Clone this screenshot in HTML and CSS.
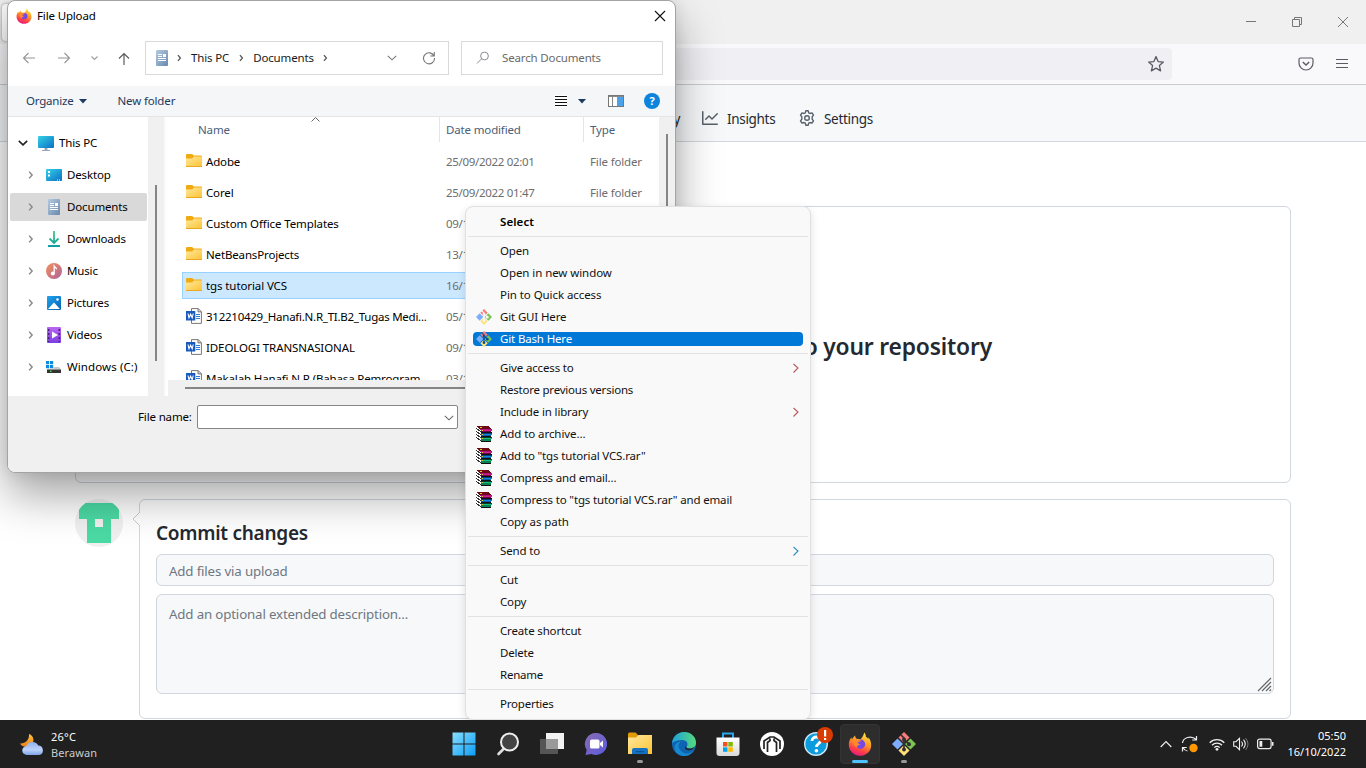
FILE: index.html
```html
<!DOCTYPE html>
<html lang="en">
<head>
<meta charset="utf-8">
<title>File Upload</title>
<link rel="stylesheet" href="styles.css">
</head>
<body>
<svg class="sprite" width="0" height="0" aria-hidden="true">
  <defs>
    <linearGradient id="gFolder" x1="0" y1="0" x2="1" y2="1"><stop offset="0" stop-color="#ffe8a0"/><stop offset="1" stop-color="#fcc433"/></linearGradient>
    <linearGradient id="gScreen" x1="0" y1="0" x2="1" y2="1"><stop offset="0" stop-color="#35d1e6"/><stop offset="1" stop-color="#0b6fc4"/></linearGradient>
    <linearGradient id="gDoc" x1="0" y1="0" x2="1" y2="1"><stop offset="0" stop-color="#b4cbe0"/><stop offset="1" stop-color="#6889ae"/></linearGradient>
    <linearGradient id="gMusic" x1="0" y1="0" x2="1" y2="1"><stop offset="0" stop-color="#f2935a"/><stop offset="1" stop-color="#b0609e"/></linearGradient>
    <linearGradient id="gVideo" x1="0" y1="0" x2="0" y2="1"><stop offset="0" stop-color="#b866f0"/><stop offset="1" stop-color="#7d3fe0"/></linearGradient>
    <linearGradient id="gPic" x1="0" y1="0" x2="1" y2="1"><stop offset="0" stop-color="#20a4ee"/><stop offset="1" stop-color="#0563b5"/></linearGradient>
    <linearGradient id="gDown" gradientUnits="userSpaceOnUse" x1="0" y1="0" x2="0" y2="16"><stop offset="0" stop-color="#3ccb7c"/><stop offset="1" stop-color="#0e9da3"/></linearGradient>
    <linearGradient id="gWin" gradientUnits="userSpaceOnUse" x1="0" y1="0" x2="24" y2="24"><stop offset="0" stop-color="#8be0ff"/><stop offset="1" stop-color="#0a9bf5"/></linearGradient>
    <linearGradient id="gFox" x1=".7" y1="0" x2=".3" y2="1"><stop offset="0" stop-color="#ffe43d"/><stop offset=".45" stop-color="#ff9326"/><stop offset=".75" stop-color="#ff3d47"/><stop offset="1" stop-color="#e2158a"/></linearGradient>
    <linearGradient id="gChat" x1="0" y1="0" x2="1" y2="1"><stop offset="0" stop-color="#8a6bb0"/><stop offset="1" stop-color="#5b5be0"/></linearGradient>
    <linearGradient id="gEdge" x1="0" y1="0" x2="1" y2="0"><stop offset="0" stop-color="#1ea0dc"/><stop offset="1" stop-color="#55da7c"/></linearGradient>
    <linearGradient id="gBag" x1="0" y1="0" x2="0" y2="1"><stop offset="0" stop-color="#fff"/><stop offset="1" stop-color="#d9d9d9"/></linearGradient>
    <linearGradient id="gCloud" x1="0" y1="0" x2="0" y2="1"><stop offset="0" stop-color="#8fb2ea"/><stop offset=".6" stop-color="#bcd2fa"/><stop offset="1" stop-color="#7da4e6"/></linearGradient>
    <linearGradient id="gMoon" x1="0" y1="0" x2="0" y2="1"><stop offset="0" stop-color="#fbc43c"/><stop offset="1" stop-color="#f0801c"/></linearGradient>
  </defs>
  <symbol id="firefox" viewBox="0 0 24 24">
    <path fill="url(#gFox)" d="M16.200.5c1.300 1.300 1.700 3 1.800 4.500.8.4 1.900 1.200 2.500 2.200 0-.7-.1-1.500-.4-2.200 2 2.100 3.100 5 3.100 8.200C23.200 19.300 18.200 23.800 12 23.800S.8 18.800.8 12.800c0-3.200 1.100-5.600 2.700-7.500 0 1 .2 1.600.5 2.200.9-1.600 1.900-3 3.200-3.900-.1 1.300.4 2.400 1.300 3.100 1.400.3 2.800-.1 4 .5C14 5.800 15.500 3.700 16.200.5z"/>
    <circle cx="12.500" cy="12.200" r="4.700" fill="#7848e0"/>
    <path fill="#ff8a2a" d="M5 8.500c2.500-1.600 5-1.400 8.200.2-1 1.200-3.300 1-4 2.300 1.200.2 2.600.8 3 2-1.600-.4-2.700.3-3 1.700C8.900 16.400 5 13.500 5 8.500z"/>
  </symbol>
  <symbol id="folder" viewBox="0 0 16 13"><path fill="#f1ab12" d="M0 1.200Q0 0 1 0h5.200l1.600 1.600H15Q16 1.600 16 2.600V13H0z"/><path fill="url(#gFolder)" d="M0 4.500h6.200L8 2.500h8v9.800H0z"/><path fill="#e9a822" d="M0 12h16v1H0z"/></symbol>
  <symbol id="word" viewBox="0 0 16 16"><path d="M5.500.6h6.800l3.100 3.100v11.700H5.500z" fill="#fff" stroke="#777"/><path d="M12 .6v3.300h3.400" fill="#ccc" stroke="#777"/><path d="M10 6.500h4M10 8.500h4M10 10.500h4" stroke="#2b7cd3"/><path fill="#185abd" d="M0 3h9.300v9.500H0z"/><path d="m2 5.500 1 4.300L4.600 6.200l1.600 3.600 1-4.300" fill="none" stroke="#fff" stroke-width="1.100"/></symbol>
  <symbol id="doc" viewBox="0 0 12 16"><rect width="12" height="16" rx="1" fill="url(#gDoc)"/><path d="M2 4.500h4M2 6.500h4M2 8.500h8M2 10.500h8" stroke="#fff"/><path fill="#fff" d="M7 4h3v3H7z"/></symbol>
  <symbol id="pc" viewBox="0 0 16 16"><rect y="1" width="16" height="12" rx="1" fill="url(#gScreen)"/><path d="M6.500 13h3v2H12v1H4v-1h2.500z" fill="#9aa7b3"/></symbol>
  <symbol id="desktop" viewBox="0 0 16 12"><rect width="16" height="12" rx="1" fill="url(#gScreen)"/><path fill="#fff" d="M2 2h2v2H2zM2 5.500h2v2H2zM11 10.500h1v1h-1zM13 10.500h1v1h-1z"/></symbol>
  <symbol id="download" viewBox="0 0 14 16"><path d="M7 0v11.500M2.500 7.500 7 12l4.500-4.500M1 15h12" fill="none" stroke="url(#gDown)" stroke-width="1.800"/></symbol>
  <symbol id="music" viewBox="0 0 16 16"><circle cx="8" cy="8" r="8" fill="url(#gMusic)"/><circle cx="6.800" cy="10.600" r="2" fill="#fff"/><path d="M8.200 10.500V3.200c.8 1.200 2.300 1.300 2.300 3" fill="none" stroke="#fff" stroke-width="1.300"/></symbol>
  <symbol id="picture" viewBox="0 0 14 14"><rect width="14" height="14" rx="1" fill="url(#gPic)"/><path fill="#fff" d="m1 13 6-6.500 6 6.500z"/><circle cx="10.500" cy="3.500" r="1.200" fill="#fff"/></symbol>
  <symbol id="video" viewBox="0 0 14 16"><rect width="14" height="16" rx="1" fill="url(#gVideo)"/><path fill="#fff" d="m5 4.500 6 3.500-6 3.500z"/><path stroke="#43207c" stroke-width="1.500" stroke-dasharray="2 2" d="M1.700 2v13M12.300 2v13"/></symbol>
  <symbol id="drive" viewBox="0 0 16 13"><path fill="#c9c9c9" d="M3 6h10l2 2.500H1z"/><path fill="#fff" d="M0 0h7.700v7.700H0z"/><path fill="#0a8be0" d="M0 0h3.200v3.200H0zM4 0h3.200v3.200H4zM0 4h3.200v3.200H0zM4 4h3.200v3.200H4z"/><path fill="#333" d="M1 8.500h14V12H1z"/><path fill="#4be04b" d="M4 9.500h1.500V11H4z"/></symbol>
  <symbol id="gitmark" viewBox="0 0 24 24">
    <path fill="#f87c7c" d="m12 0 5.500 5.500L12 11 6.500 5.500z"/><path fill="#7caefc" d="m5.500 6.500 5.500 5.500-5.500 5.500L0 12z"/><path fill="#7cc452" d="m18.500 6.500L24 12l-5.500 5.500L13 12z"/><path fill="#ffe07c" d="m12 13 5.500 5.500L12 24l-5.500-5.500z"/>
    <path d="M8.500 2.500 12 6v12M12 7.500l5 4.500" fill="none" stroke="currentColor" stroke-width="1.700"/><g fill="currentColor"><circle cx="12" cy="7.500" r="2"/><circle cx="17" cy="12.200" r="2"/><circle cx="12" cy="17.500" r="2"/></g>
  </symbol>
  <symbol id="rar" viewBox="0 0 16 16" shape-rendering="crispEdges">
    <path fill="#fff" d="M0 1h4l2 4v11H4l-4-4z"/>
    <path d="M0 2l5 4M0 5l5 4M0 8l5 4M0 11l5 4" stroke="#333" fill="none"/>
    <path fill="#6d0a16" d="M1 0h11l4 3v1H4L1 1z"/>
    <path fill="#111" d="M5 6h11v1H5zM5 10h10v1H5zM5 15h10v1H5z"/>
    <path fill="#b0107c" d="M4 3h12v1H4z"/><path fill="#d0208c" d="M5 4h11v1H5z"/><path fill="#6e0446" d="M5 5h10v1H5z"/>
    <path fill="#083c78" d="M5 7h11v1H5z"/><path fill="#1488e0" d="M5 8h11v1H5z"/><path fill="#0d5ca8" d="M5 9h10v1H5z"/>
    <path fill="#063c2c" d="M5 11h11v1H5z"/><path fill="#14c084" d="M5 12h11v1H5z"/><path fill="#088050" d="M5 13h10v2H5z"/>
    <path fill="#e0d020" d="M4 1h2v1H4zM6 4h1v1H6zM6 8h1v1H6zM6 12h1v1H6z"/>
  </symbol>
  <symbol id="cr" viewBox="0 0 8 12"><path d="m1.500 1.500 4 4.500-4 4.500" fill="none" stroke="currentColor" stroke-width="2"/></symbol>
  <symbol id="crThin" viewBox="0 0 8 12"><path d="M1.500 2 6 6l-4.500 4.500" fill="none" stroke="currentColor" stroke-width="1.100"/></symbol>
  <symbol id="cd" viewBox="0 0 10 6"><path d="m.8.8 4.200 4 4.200-4" fill="none" stroke="currentColor" stroke-width="1.100"/></symbol>
</svg>

<div class="screen">
  <main class="browser">
    <div class="tabstrip">
      <div class="tab"></div>
      <div class="caption">
        <svg width="12" height="12"><path d="M1 5.500h10" stroke="#777"/></svg>
        <svg width="12" height="12"><path d="M1.500 3.500h7v7h-7zM3.500 3V1.500h7v7H9" fill="none" stroke="#777"/></svg>
        <svg width="12" height="12"><path d="m1 1 10 10M11 1 1 11" stroke="#777"/></svg>
      </div>
    </div>
    <div class="toolbar">
      <div class="urlbar"><svg width="18" height="18" viewBox="0 0 18 18"><path d="m9 1.600 2.100 5 5.300.5-4 3.500 1.200 5.300L9 13.100l-4.600 2.800 1.200-5.300-4-3.500 5.300-.5z" fill="none" stroke="#5b5b66" stroke-width="1.300" stroke-linejoin="round"/></svg></div>
      <svg class="pocket" width="16" height="16" viewBox="0 0 16 16"><path d="M2.500 2h11Q15 2 15 3.500V7a7 7 0 0 1-14 0V3.500Q1 2 2.500 2z" fill="none" stroke="#5b5b66" stroke-width="1.200"/><path d="m4.800 6 3.200 3 3.200-3" fill="none" stroke="#5b5b66" stroke-width="1.400"/></svg>
      <svg width="14" height="12"><path d="M1 1.500h12M1 5.500h12M1 9.500h12" stroke="#5b5b66" stroke-width="1.200"/></svg>
    </div>
    <nav class="reponav">
      <span class="nav-sec">Security</span>
      <svg width="16" height="16" viewBox="0 0 16 16" fill="#57606a"><path d="M1.500 1.750V13.500h13.750a.75.75 0 0 1 0 1.500H.75a.75.75 0 0 1-.75-.75V1.750a.75.75 0 0 1 1.500 0Zm14.280 2.530-5.250 5.250a.75.75 0 0 1-1.060 0L7 7.060 4.280 9.780a.75.75 0 0 1-1.060-1.060l3.250-3.250a.75.75 0 0 1 1.060 0L10 7.940l4.720-4.720a.75.75 0 0 1 1.060 1.060Z"/></svg>
      <span class="nav-ins">Insights</span>
      <svg width="16" height="16" viewBox="0 0 16 16" fill="none" stroke="#57606a" stroke-width="1.400" stroke-linejoin="round"><circle cx="8" cy="8" r="2.300"/><path d="m6.800.8h2.400l.5 2 1.300.7 2-.6 1.500 2.200-1.300 1.600v2.600l1.300 1.600-1.500 2.200-2-.6-1.300.7-.5 2H6.800l-.5-2-1.300-.7-2 .6-1.500-2.200 1.300-1.600V6.700L1.500 5.100 3 2.900l2 .6 1.300-.7z"/></svg>
      <span class="nav-set">Settings</span>
    </nav>
    <section class="dropbox"><h1>Drag additional files here to add them to your repository</h1></section>
    <section class="commit">
      <svg class="avatar" width="48" height="48" viewBox="0 0 48 48"><defs><clipPath id="round"><circle cx="24" cy="24" r="24"/></clipPath></defs><g clip-path="url(#round)"><path fill="#f0f0f0" d="M0 0h48v48H0z"/><path fill="#4bdaa4" fill-rule="evenodd" d="M4 4h40v16h-8v24H12V20H4zM20 20v8h8v-8z"/></g></svg>
      <div class="commit-card">
        <svg class="notch" width="9" height="16" viewBox="0 0 9 16"><path fill="#fff" d="M9 0 1 8l8 8z"/><path d="M8 1 1 8l7 7" fill="none" stroke="#c4ccd4"/></svg>
        <h2>Commit changes</h2>
        <div class="field one">Add files via upload</div>
        <div class="field area">Add an optional extended description…<svg class="grip" width="15" height="15"><path d="M1 14 14 1M5 14l9-9M9 14l5-5M12.500 14l1.500-1.500" stroke="#666" stroke-width="1.200"/></svg></div>
      </div>
    </section>
  </main>

  <div class="dialog">
    <header class="d-title"><svg width="16" height="16"><use href="#firefox"/></svg><span>File Upload</span>
      <svg class="close" width="12" height="12"><path d="m1 1 10 10M11 1 1 11" stroke="#111" stroke-width="1.100"/></svg></header>
    <div class="d-nav">
      <svg width="14" height="12" class="back"><path d="M13 6H1.500M6.500 1l-5 5 5 5" fill="none" stroke="#969696" stroke-width="1.100"/></svg>
      <svg width="14" height="12" class="fwd"><path d="M1 6h11.500M7.500 1l5 5-5 5" fill="none" stroke="#969696" stroke-width="1.100"/></svg>
      <svg width="7" height="5" class="rec"><path d="m.5.5 3 3 3-3" fill="none" stroke="#a0a0a0" stroke-width="1.200"/></svg>
      <svg width="12" height="13" class="up"><path d="M6 13V1.500M1 6.500l5-5 5 5" fill="none" stroke="#5c5c5c" stroke-width="1.200"/></svg>
      <div class="crumbs"><svg width="12" height="16"><use href="#doc"/></svg>
        <svg class="c1" width="5" height="8"><use href="#cr"/></svg><span>This PC</span>
        <svg class="c2" width="5" height="8"><use href="#cr"/></svg><span>Documents</span>
        <svg class="c3" width="5" height="8"><use href="#cr"/></svg>
        <svg class="cdown" width="10" height="6"><use href="#cd"/></svg>
        <svg class="reload" width="14" height="14" viewBox="0 0 14 14"><path d="M12 5a5.500 5.500 0 1 0 .5 2M12.300 1v4h-4" fill="none" stroke="#777" stroke-width="1.100"/></svg>
      </div>
      <div class="search"><svg width="14" height="14"><circle cx="8.500" cy="5" r="3.900" fill="none" stroke="#8a8a94"/><path d="M5.700 7.700 1 12.500" stroke="#8a8a94"/></svg><span>Search Documents</span></div>
    </div>
    <div class="d-tools">
      <span class="org">Organize</span><svg class="tri" width="8" height="5"><path fill="#1d3b62" d="M0 0h8L4 4.500z"/></svg>
      <span class="newf">New folder</span>
      <svg class="view" width="12" height="12" shape-rendering="crispEdges"><path d="M0 1.500h12M0 4.500h12M0 7.500h12M0 10.500h12" stroke="#111"/></svg>
      <svg class="tri2" width="8" height="5"><path fill="#1d3b62" d="M0 0h8L4 4.500z"/></svg>
      <svg class="pane" width="16" height="12" shape-rendering="crispEdges"><path d="M.5.500h15v11H.5z" fill="#fff" stroke="#777"/><path d="M1 1.500h14M4.500 1v10" stroke="#888"/><path fill="#4aa3ea" d="M9 2h6v9H9z"/></svg>
      <span class="help">?</span>
    </div>
    <div class="d-body">
      <aside class="tree">
        <div class="node root"><svg width="10" height="6" viewBox="0 0 10 6"><path d="m.8.8 4.200 4 4.200-4" fill="none" stroke="#222" stroke-width="1.600"/></svg><svg class="ic" width="16" height="16"><use href="#pc"/></svg>This PC</div>
        <div class="node"><svg width="6" height="10"><use href="#cr"/></svg><svg class="ic" width="16" height="12"><use href="#desktop"/></svg>Desktop</div>
        <div class="node sel"><svg width="6" height="10"><use href="#cr"/></svg><svg class="ic" width="16" height="16"><use href="#doc"/></svg>Documents</div>
        <div class="node"><svg width="6" height="10"><use href="#cr"/></svg><svg class="ic" width="16" height="16"><use href="#download"/></svg>Downloads</div>
        <div class="node"><svg width="6" height="10"><use href="#cr"/></svg><svg class="ic" width="16" height="16"><use href="#music"/></svg>Music</div>
        <div class="node"><svg width="6" height="10"><use href="#cr"/></svg><svg class="ic" width="16" height="14"><use href="#picture"/></svg>Pictures</div>
        <div class="node"><svg width="6" height="10"><use href="#cr"/></svg><svg class="ic" width="16" height="16"><use href="#video"/></svg>Videos</div>
        <div class="node drive"><svg width="6" height="10"><use href="#cr"/></svg><svg class="ic" width="16" height="13"><use href="#drive"/></svg>Windows (C:)</div>
      </aside>
      <div class="gutter"><i></i></div>
      <div class="files">
        <div class="cols"><span class="cn">Name<svg class="sort" width="9" height="5"><path d="m.5 4.500 4-4 4 4" fill="none" stroke="#666"/></svg></span><span class="cdt">Date modified</span><span class="ct">Type</span></div>
        <div class="rows">
          <div class="row"><svg width="16" height="13"><use href="#folder"/></svg><b>Adobe</b><span>25/09/2022 02:01</span><em>File folder</em></div>
          <div class="row"><svg width="16" height="13"><use href="#folder"/></svg><b>Corel</b><span>25/09/2022 01:47</span><em>File folder</em></div>
          <div class="row"><svg width="16" height="13"><use href="#folder"/></svg><b class="wide">Custom Office Templates</b><span>09/10/2022</span></div>
          <div class="row"><svg width="16" height="13"><use href="#folder"/></svg><b>NetBeansProjects</b><span>13/10/2022</span></div>
          <div class="row picked"><svg width="16" height="13"><use href="#folder"/></svg><b class="wide">tgs tutorial VCS</b><span>16/10/2022</span></div>
          <div class="row w"><svg width="16" height="16"><use href="#word"/></svg><b class="long">312210429_Hanafi.N.R_TI.B2_Tugas Medi...</b><span>05/10/2022</span></div>
          <div class="row w"><svg width="16" height="16"><use href="#word"/></svg><b class="wide">IDEOLOGI TRANSNASIONAL</b><span>09/10/2022</span></div>
          <div class="row w"><svg width="16" height="16"><use href="#word"/></svg><b>Makalah Hanafi.N.R (Bahasa Pemrogram...</b><span>03/10/2022</span></div>
        </div>
        <div class="hscroll"><i></i></div>
      </div>
      <div class="vscroll"><i></i></div>
    </div>
    <div class="d-foot"><label>File name:</label><div class="combo"><svg width="10" height="6"><use href="#cd"/></svg></div></div>
  </div>

  <ul class="menu">
    <li class="strong">Select</li>
    <li class="sep"></li>
    <li>Open</li><li class="wide">Open in new window</li><li class="wide">Pin to Quick access</li>
    <li><svg class="mi gui" width="16" height="16"><use href="#gitmark"/></svg>Git GUI Here</li>
    <li class="hot"><svg class="mi bash" width="16" height="16"><use href="#gitmark"/></svg>Git Bash Here</li>
    <li class="sep"></li>
    <li>Give access to<svg class="sub red" width="8" height="12"><use href="#crThin"/></svg></li>
    <li class="tight">Restore previous versions</li>
    <li>Include in library<svg class="sub red" width="8" height="12"><use href="#crThin"/></svg></li>
    <li class="wide"><svg class="mi" width="16" height="16"><use href="#rar"/></svg>Add to archive...</li>
    <li><svg class="mi" width="16" height="16"><use href="#rar"/></svg>Add to "tgs tutorial VCS.rar"</li>
    <li><svg class="mi" width="16" height="16"><use href="#rar"/></svg>Compress and email...</li>
    <li><svg class="mi" width="16" height="16"><use href="#rar"/></svg>Compress to "tgs tutorial VCS.rar" and email</li>
    <li class="wide">Copy as path</li>
    <li class="sep"></li>
    <li>Send to<svg class="sub blue" width="8" height="12"><use href="#crThin"/></svg></li>
    <li class="sep"></li>
    <li>Cut</li><li>Copy</li>
    <li class="sep"></li>
    <li>Create shortcut</li><li class="tight">Delete</li><li class="tight">Rename</li>
    <li class="sep"></li>
    <li class="tight">Properties</li>
  </ul>

  <footer class="taskbar">
    <div class="weather">
      <svg width="24" height="22" viewBox="0 0 24 22"><path fill="url(#gMoon)" d="M9 0c5 1.500 6 8 2 11S2 13 0 9.500C5 10 9.500 6 9 0z"/><path fill="url(#gCloud)" d="M7 21a4.500 4.500 0 0 1-.5-9 6.500 6.500 0 0 1 11.800-.5A4.800 4.800 0 0 1 19 21z"/></svg>
      <div><p class="temp">26°C</p><p class="dim">Berawan</p></div>
    </div>
    <div class="apps">
      <div><svg width="24" height="24" viewBox="0 0 24 24" fill="url(#gWin)"><path d="M.5.500h11v11H.5zM12.500.5h11v11h-11zM.5 12.500h11v11H.5zM12.500 12.500h11v11h-11z"/></svg></div>
      <div><svg width="24" height="24" viewBox="0 0 24 24"><path d="M7.500 17 2.500 22" stroke="#ddd" stroke-width="2.600" stroke-linecap="round"/><circle cx="13.500" cy="10" r="8.500" fill="#444" stroke="#eee" stroke-width="2"/></svg></div>
      <div><svg width="24" height="24" viewBox="0 0 24 24"><path fill="#f2f2f2" d="M6 1h18v16H6z"/><path fill="#555" d="M0 7h18v15H0z"/><path fill="#9a9a9a" d="M6 7h12v10H6z"/></svg></div>
      <div><svg width="24" height="24" viewBox="0 0 24 24"><path fill="url(#gChat)" d="M12.500 1a11 11 0 1 1-5 21L1.500 23l1.200-5A11 11 0 0 1 12.500 1z"/><rect x="6" y="7.500" width="9.500" height="9" rx="1.500" fill="#fff"/><path fill="#fff" d="m16 11 3-2.500v7L16 13z"/></svg></div>
      <div class="run"><svg width="24" height="24" viewBox="0 0 24 24"><path fill="#e19b07" d="M0 2q0-1.500 1.500-1.500h6L10 3v5H0z"/><path fill="url(#gFolder)" d="M0 5.500h8L10.500 3H24v19H0z"/><path fill="#1473c4" d="M4 22v-4q0-2 2-2h12q2 0 2 2v4z"/><path fill="#0b5394" d="M8 19h8v1.300H8z"/></svg></div>
      <div><svg width="24" height="24" viewBox="0 0 24 24"><circle cx="12" cy="12" r="12" fill="#0f63b0"/><path fill="url(#gEdge)" d="M0 11.500C.4 5 5.500 0 12 0c7 0 12 5 12 10.500 0 4-3 6-6 6-3.500 0-4-1.300-3-2.500 1.500-2 .2-6-5-6C5 8 1.500 9.500 0 11.500z"/><path fill="#1688d0" d="M9 9.500c-4 3-3 9 3 11.500 4 1.500 8-.3 10-3-2 5-10 8-15.500 4.500C0 18.300 2 10 9 9.500z"/><path fill="#222" d="M14.500 14c-1 1.300-.4 2.500 3 2.500 2 0 3.500-.7 4.700-1.800-1 3-4 4-6.700 3.300-3-.7-3.300-3.500-1-4z"/></svg></div>
      <div><svg width="24" height="24" viewBox="0 0 24 24"><path d="M7 6V1.500h10V6" fill="none" stroke="#2aa8ee" stroke-width="2"/><path fill="url(#gBag)" d="M.5 5.500h23V21q0 3-3 3h-17q-3 0-3-3z"/><path fill="#f25022" d="M7 10h4.500v4.500H7z"/><path fill="#7fba00" d="M12.300 10h4.500v4.500h-4.500z"/><path fill="#00a4ef" d="M7 15.300h4.500v4.500H7z"/><path fill="#ffb900" d="M12.300 15.300h4.500v4.500h-4.500z"/></svg></div>
      <div><svg width="24" height="24" viewBox="0 0 24 24"><circle cx="12" cy="12" r="12" fill="#fff"/><path d="M4 17V9l6-4h4l6 4v8M7.500 20v-9.500L10 8.500v-2M16.500 20v-9.500L14 8.500v-2" fill="none" stroke="#222" stroke-width="1.700"/></svg></div>
      <div class="helpapp"><svg width="24" height="24" viewBox="0 0 24 24"><circle cx="12" cy="12" r="11.300" fill="#0c9bdc" stroke="#c9e7f6" stroke-width="1.400"/><path d="M8 9c0-5.500 8.500-5 8.500-.5 0 3.200-4 3.200-4 6.500" fill="none" stroke="#fff" stroke-width="2.800"/><circle cx="12.400" cy="18.700" r="1.800" fill="#fff"/></svg><svg class="alert" width="16" height="16"><circle cx="8" cy="8" r="8" fill="#da3b01"/><path fill="#fff" d="M7 3h2.200v6.500H7zM7 11h2.200v2H7z"/></svg></div>
      <div class="active"><svg width="24" height="24"><use href="#firefox"/></svg></div>
      <div class="run"><svg class="bash" width="24" height="24"><use href="#gitmark"/></svg></div>
    </div>
    <div class="tray">
      <svg width="12" height="8"><path d="m.7 7 5.300-5.500L11.300 7" fill="none" stroke="#eee" stroke-width="1.200"/></svg>
      <svg class="sync" width="18" height="18" viewBox="0 0 18 18"><path d="M1.500 8C2 2.500 10 0 15.300 4.500M15.500 1v4h-4.300M1.500 16.500v-4h4.300M2 12.800C3 14.500 4.500 15.800 6.500 16" fill="none" stroke="#eee" stroke-width="1.200"/><circle cx="12.500" cy="13" r="4.200" fill="#ff9800"/></svg>
      <svg class="wifi" width="16" height="13" viewBox="0 0 16 13"><path d="M.7 4.700a10.300 10.300 0 0 1 14.600 0M3 7.200a7 7 0 0 1 10 0M5.300 9.600a3.800 3.800 0 0 1 5.400 0" fill="none" stroke="#eee" stroke-width="1.300"/><circle cx="8" cy="11.300" r="1.400" fill="#eee"/></svg>
      <svg class="vol" width="16" height="14" viewBox="0 0 16 14"><path d="M.7 4.700H3L6.500 1.300v11.400L3 9.300H.7zM8.500 4.500q2 2.500 0 5M10.500 2.700q3.500 4.300 0 8.600" fill="none" stroke="#eee" stroke-width="1.100"/><path d="M12.500 1q5 6 0 12" fill="none" stroke="#777"/></svg>
      <svg class="bat" width="17" height="12" viewBox="0 0 17 12"><rect x=".6" y="1.100" width="13.500" height="9.500" rx="2" fill="none" stroke="#eee" stroke-width="1.200"/><path fill="#eee" d="M2.500 3h2.800v5.800H2.500zM15 4h1.500v3.800H15z"/></svg>
      <div class="clock"><p>05:50</p><p>16/10/2022</p></div>
    </div>
  </footer>
</div>
</body>
</html>
```

FILE: styles.css
```css
* { box-sizing: border-box; margin: 0; padding: 0; }
body { font-family: "Noto Sans", "Open Sans", sans-serif; overflow: hidden; }
svg { display: block; flex: none; }
.sprite { position: absolute; }
.screen { position: relative; width: 1366px; height: 768px; background: #fff; overflow: hidden; display: flex; flex-direction: column; }

/* browser page */
.browser { flex: 1; min-height: 0; overflow: hidden; }
.tabstrip { height: 44px; background: #f0f0f0; display: flex; justify-content: space-between; align-items: center; }
.tab { width: 200px; height: 37px; margin-left: 2px; background: #fff; border-radius: 4px; box-shadow: 0 0 3px rgba(0,0,0,.4); }
.caption { display: flex; gap: 34px; padding-right: 17px; }
.toolbar { height: 41px; background: #f9f9fb; border-bottom: 1px solid #ccccd0; display: flex; align-items: center; }
.urlbar { width: 1052px; margin-left: 120px; height: 32px; background: #f0f0f4; border-radius: 4px; display: flex; align-items: center; justify-content: flex-end; padding-right: 7px; }
.pocket { margin: 0 21px 0 126px; }
.reponav { height: 57px; background: #f6f8fa; border-bottom: 1px solid #d0d7de; display: flex; align-items: center; font-size: 13.500px; letter-spacing: -.32px; color: #24292f; padding: 12px 0 0 602px; }
.reponav span { line-height: 20px; white-space: nowrap; }
.reponav svg { margin-top: -2px; }
.nav-sec { width: 100px; padding-right: 22px; text-align: right; }
.nav-ins { width: 72px; padding-left: 9px; margin-right: 9px; }
.nav-set { padding-left: 9px; }
.dropbox { margin: 64px 75px 0; height: 277px; border: 1px solid #d0d7de; border-radius: 6px; display: flex; justify-content: flex-end; padding: 122px 298px 0 0; }
h1 { font-size: 22.800px; font-weight: 600; line-height: 36px; color: #24292f; letter-spacing: -.18px; white-space: nowrap; }
.commit { display: flex; margin: 16px 75px 0; gap: 16px; }
.commit-card { position: relative; flex: 1; height: 220px; border: 1px solid #d0d7de; border-radius: 6px; padding: 17px 16px 0; }
.notch { position: absolute; left: -8px; top: 11px; }
h2 { font-size: 19px; font-weight: 600; line-height: 32px; color: #24292f; letter-spacing: -.27px; }
.field { border: 1px solid #d0d7de; border-radius: 6px; background: #f6f8fa; color: #6e7781; font-size: 13.300px; letter-spacing: -.16px; padding: 0 12px; }
.one { height: 32px; line-height: 32px; margin-top: 5px; }
.area { position: relative; height: 100px; margin-top: 8px; line-height: 20px; padding-top: 9px; }
.grip { position: absolute; right: 1px; bottom: 1px; }

/* file dialog */
.dialog { position: absolute; left: 7px; top: 0; width: 669px; height: 473px; background: #fff; border: 1px solid #a3a3a3; border-radius: 8px; box-shadow: 0 22px 46px rgba(0,0,0,.36), 0 0 16px rgba(0,0,0,.1); overflow: hidden; font-size: 11.500px; letter-spacing: -.15px; line-height: 16px; display: flex; flex-direction: column; }
.d-title { height: 29px; display: flex; align-items: center; padding: 0 9px 0 8px; gap: 5px; color: #000; }
.close { margin-left: auto; }
.d-nav { height: 56px; display: flex; align-items: center; padding-left: 14px; }
.fwd { margin-left: 21px; } .rec { margin-left: 20px; } .up { margin-left: 20px; }
.crumbs { width: 304px; height: 34px; margin-left: 15px; border: 1px solid #d9d9d9; display: flex; align-items: center; padding-left: 10px; color: #1a1a1a; }
.crumbs .c1 { margin: 0 9px 0 9px; } .crumbs .c2 { margin: 0 9px 0 10px; } .crumbs .c3 { margin-left: 9px; }
.crumbs svg { color: #555; }
.crumbs .cdown { margin-left: auto; color: #777; } .reload { margin: 0 12px 0 25px; }
.search { width: 202px; height: 34px; margin-left: 12px; border: 1px solid #d9d9d9; display: flex; align-items: center; gap: 12px; padding-left: 14px; color: #6a6a6a; }
.d-tools { height: 31px; background: #f4f6f8; border-bottom: 1px solid #e3e5e8; display: flex; align-items: center; padding: 0 15px 0 18px; color: #1f3a5f; }
.org { letter-spacing: -.2px; }
.tri { margin-left: 5px; } .newf { margin-left: 31px; } .view { margin-left: auto; background: #fff; } .tri2 { margin: 0 22px 0 11px; }
.help { width: 16px; height: 16px; margin-left: 20px; border-radius: 50%; background: #0c84dc; color: #fff; font-weight: 700; text-align: center; font-size: 11px; }
.d-body { height: 279px; display: flex; }
.tree { width: 140px; padding: 12px 1px 0 2px; }
.node { height: 28px; margin-bottom: 4px; padding-left: 18px; display: flex; align-items: center; border-radius: 2px; color: #000; white-space: nowrap; }
.node > svg:first-child { color: #8a8a8a; }
.node .ic { margin: 0 5px 0 12px; }
.node.root { padding-left: 8px; } .node.root .ic { margin-left: 10px; }
.drive { letter-spacing: .1px; }
.sel { background: #d9d9d9; }
.gutter { width: 16px; background: #f0f0f0; padding: 68px 0 0 7px; }
.gutter i { display: block; width: 2px; height: 176px; background: #858585; }
.files { width: 495px; border-left: 2px solid #fafafa; display: flex; flex-direction: column; }
.cols { height: 28px; display: flex; color: #4c607a; line-height: 26px; }
.cn { position: relative; width: 274px; padding-left: 32px; border-right: 1px solid #e5e5e5; height: 25px; }
.sort { position: absolute; left: 145px; top: 0; }
.cdt { width: 144px; padding-left: 6px; border-right: 1px solid #e5e5e5; height: 25px; }
.ct { padding-left: 6px; }
.rows { height: 235px; overflow: hidden; padding-top: 3px; }
.row { height: 27px; margin: 0 0 4px 16px; padding-left: 4px; display: flex; align-items: center; color: #000; border: 1px solid transparent; border-right: 0; white-space: nowrap; }
.row svg { margin: -2px 4px 0 -1px; } .row.w svg { margin-top: -1px; }
.row b { font-weight: 400; width: 240px; }
.row .wide { letter-spacing: -.1px; } .row .long { letter-spacing: -.25px; }
.row span { color: #6d6d6d; width: 144px; letter-spacing: -.32px; } .row em { font-style: normal; color: #6d6d6d; }
.picked { background: #cce8ff; border-color: #99d1ff; }
.hscroll { height: 16px; background: #f0f0f0; margin-left: 2px; padding: 7px 0 0 17px; }
.hscroll i { display: block; height: 2px; background: #858585; }
.vscroll { width: 16px; background: #f0f0f0; padding: 17px 0 0 7px; }
.vscroll i { display: block; width: 2px; height: 180px; background: #858585; }
.d-foot { flex: 1; background: #f0f0f0; padding: 9px 0 0 130px; display: flex; align-items: flex-start; }
.d-foot label { width: 59px; line-height: 24px; white-space: nowrap; }
.combo { width: 261px; height: 24px; background: #fff; border: 1px solid #868686; border-radius: 2px; display: flex; align-items: center; justify-content: flex-end; padding: 2px 3px 0 0; color: #666; }

/* context menu */
.menu { position: absolute; left: 465px; top: 206px; width: 346px; height: 514px; list-style: none; background: #f9f9f9; border: 1px solid #e0e0e0; border-radius: 8px; padding: 4px 2px; box-shadow: 0 3px 8px rgba(0,0,0,.12); font-size: 11.500px; letter-spacing: -.15px; color: #111; }
.menu li { position: relative; height: 22px; line-height: 22px; padding-left: 32px; white-space: nowrap; }
.menu .wide { letter-spacing: -.07px; }
.menu .tight { letter-spacing: -.22px; }
.menu .sep { height: 7px; padding: 0; background: linear-gradient(#e2e2e2, #e2e2e2) 0 3px / 100% 1px no-repeat; }
.menu .strong { font-weight: 600; color: #000; letter-spacing: .1px; }
.menu .hot { height: 14px; margin: 4px 5px; line-height: 14px; padding-left: 27px; border-radius: 4px; background: #0078d7; color: #fff; }
.mi { position: absolute; left: 8px; top: 3px; }
.hot .mi { left: 3px; top: -1px; }
.gui { color: #f9f9f9; } .bash { color: #303030; }
.hot .bash { color: #0d4f8c; }
.sub { position: absolute; right: 8px; top: 5px; }
.red { color: #b65a5a; } .blue { color: #328cbd; }

/* taskbar */
.taskbar { position: relative; height: 48px; background: #202020; color: #fff; display: grid; grid-template-columns: 442px 484px 1fr; font-size: 11px; line-height: 16px; }
.weather { display: flex; align-items: center; gap: 7px; padding-left: 20px; letter-spacing: -.1px; padding-top: 1px; }
.temp { letter-spacing: .25px; }
.dim { color: #ccc; letter-spacing: .1px; }
.apps { display: grid; grid-template-columns: repeat(11, 44px); margin-left: -.5px; }
.apps div { position: relative; height: 40px; margin: 4px 2px; border-radius: 4px; display: flex; align-items: center; justify-content: center; }
.apps .active { background: #2d2d2d; border: 1px solid #343434; }
.active::after, .run::after { content: ""; position: absolute; bottom: 1px; left: 17px; width: 6px; height: 3px; border-radius: 2px; background: #999; }
.apps .active::after { left: 11px; bottom: 0; width: 16px; background: #4cc2ff; }
.alert { position: absolute; right: 3px; top: 3px; }
.tray { display: flex; align-items: center; justify-content: flex-end; padding-right: 20px; }
.sync { margin: 0 10px 0 9px; } .vol { margin: 0 8px 0 8px; }
.clock { width: 72px; text-align: right; letter-spacing: 0; }
```
